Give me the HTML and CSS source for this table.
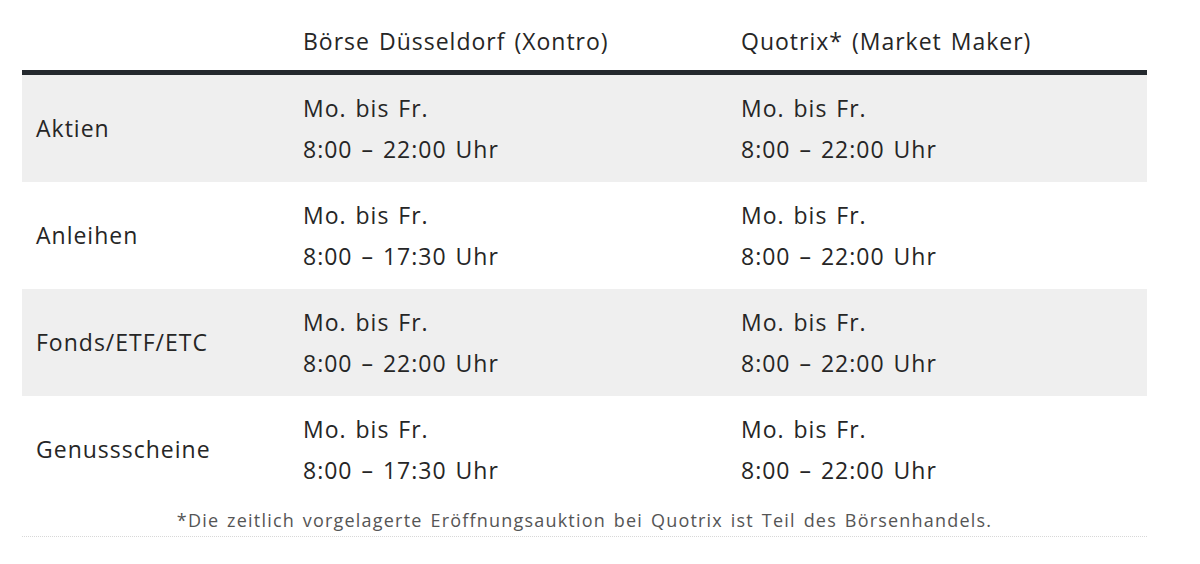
FILE: index.html
```html
<!DOCTYPE html>
<html lang="de">
<head>
<meta charset="utf-8">
<link rel="stylesheet" href="styles.css">
</head>
<body>
<div class="wrap">
  <table class="hours">
    <thead>
      <tr>
        <th class="c1"></th>
        <th class="c2">Börse Düsseldorf (Xontro)</th>
        <th class="c3">Quotrix* (Market Maker)</th>
      </tr>
    </thead>
    <tbody>
      <tr class="alt">
        <td>Aktien</td>
        <td>Mo. bis Fr.<br>8:00 – 22:00 Uhr</td>
        <td>Mo. bis Fr.<br>8:00 – 22:00 Uhr</td>
      </tr>
      <tr>
        <td>Anleihen</td>
        <td>Mo. bis Fr.<br>8:00 – 17:30 Uhr</td>
        <td>Mo. bis Fr.<br>8:00 – 22:00 Uhr</td>
      </tr>
      <tr class="alt">
        <td>Fonds/ETF/ETC</td>
        <td>Mo. bis Fr.<br>8:00 – 22:00 Uhr</td>
        <td>Mo. bis Fr.<br>8:00 – 22:00 Uhr</td>
      </tr>
      <tr>
        <td>Genussscheine</td>
        <td>Mo. bis Fr.<br>8:00 – 17:30 Uhr</td>
        <td>Mo. bis Fr.<br>8:00 – 22:00 Uhr</td>
      </tr>
    </tbody>
  </table>
  <p class="note">*Die zeitlich vorgelagerte Eröffnungsauktion bei Quotrix ist Teil des Börsenhandels.</p>
</div>
</body>
</html>
```

FILE: styles.css
```css
html, body {
  margin: 0;
  padding: 0;
  background: #ffffff;
}

body {
  font-family: "Open Sans", "Noto Sans", sans-serif;
  color: #262626;
}

.wrap {
  width: 1125px;
  margin-left: 22px;
}

.hours {
  width: 100%;
  border-collapse: collapse;
  font-size: 23px;
  letter-spacing: 1px;
  word-spacing: 2px;
}

.hours th {
  font-weight: 400;
  text-align: left;
  height: 58px;
  padding: 12px 14px 0;
  vertical-align: middle;
  border-bottom: 5px solid #24292e;
}

.hours td {
  height: 107px;
  padding: 0 14px;
  line-height: 40.5px;
  vertical-align: middle;
}

.hours .c1 { width: 239px; }
.hours .c2 { width: 410px; }

.hours tr.alt td {
  background: #efefef;
}

.note {
  margin: 0;
  padding: 5px 0 4px;
  text-align: center;
  font-size: 18px;
  letter-spacing: 1.2px;
  word-spacing: 2px;
  color: #555555;
  border-bottom: 1px dotted #d8d8d8;
}
```
